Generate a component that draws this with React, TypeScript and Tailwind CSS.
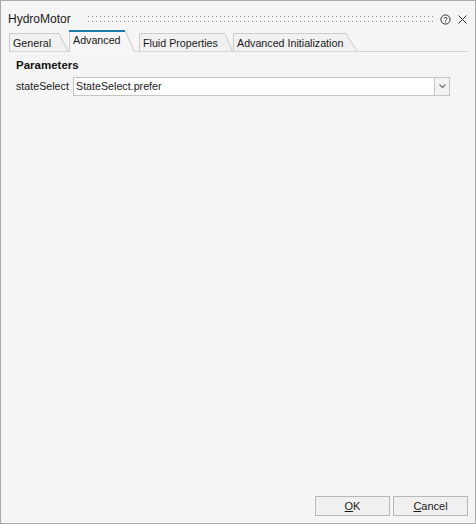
import type { ReactNode } from "react";

// Диалог параметров компонента HydroMotor

interface TabProps {
  readonly label: string;
  readonly width: number;
  readonly slant: number;
  readonly active?: boolean;
}

function Tab({ label, width, slant, active = false }: TabProps) {
  const h = active ? 22 : 19;
  const total = width + slant;
  const outline = `M0.5,${h} V0.5 H${width} L${total - 0.5},${h}`;
  return (
    <div className="relative flex shrink-0 items-start pl-[4px] pt-[3px]" style={{ width: total, height: h }}>
      <svg className="absolute left-0 top-0" width={total} height={h}>
        <path d={`${outline} Z`} fill={active ? "#f6f6f6" : "#f1f1f1"} stroke="none" />
        <path d={outline} fill="none" stroke="#cccccc" strokeWidth={1} />
        {active ? (
          <path d={`M0,1 H${width}`} stroke="#1b7ca5" strokeWidth={2} />
        ) : (
          <path d={`M0,${h - 0.5} H${total}`} stroke="#d6d6d6" strokeWidth={1} />
        )}
      </svg>
      <span className="relative text-[10.7px] leading-[14px] text-[#1a1a1a]">{label}</span>
    </div>
  );
}

function Gap({ w }: { readonly w?: number }) {
  return (
    <div
      className={`h-px self-end bg-[#d6d6d6] ${w ? "shrink-0" : "flex-1"}`}
      style={w ? { width: w } : undefined}
    />
  );
}

function DialogButton({ children }: { readonly children: ReactNode }) {
  return (
    <button
      type="button"
      className="flex h-[20px] w-[75px] items-center justify-center border border-[#b9b9b9] bg-[#f0f0f0] text-[11px] text-[#1a1a1a]"
    >
      {children}
    </button>
  );
}

export default function App() {
  return (
    <div
      className="flex h-[524px] w-[476px] flex-col border border-[#ababab] bg-[#f5f5f5]"
      style={{ fontFamily: '"Liberation Sans", Arial, sans-serif' }}
    >
      {/* Заголовок */}
      <div className="flex h-[29px] shrink-0 items-start pl-[7px] pr-[8px]">
        <span className="mt-[10px] text-[12px] leading-[16px] text-[#1a1a1a]">HydroMotor</span>
        <svg className="ml-[17px] mt-[14px]" width={346} height={8}>
          <defs>
            <pattern id="grip" width={4} height={5} patternUnits="userSpaceOnUse">
              <rect x={0} y={1} width={1} height={1} fill="#858585" />
            </pattern>
          </defs>
          <rect x={0} y={0} width={346} height={8} fill="url(#grip)" />
        </svg>
        <svg className="ml-[6px] mt-[13px]" width={11} height={11} viewBox="0 0 11 11">
          <circle cx={5.5} cy={5.5} r={4.6} fill="none" stroke="#333" strokeWidth={1} />
          <path d="M3.9,4.4 C3.9,3.2 7.1,3.1 7.1,4.5 C7.1,5.5 5.5,5.5 5.5,6.6" fill="none" stroke="#333" strokeWidth={1} />
          <rect x={5} y={7.4} width={1} height={1} fill="#333" />
        </svg>
        <svg className="ml-[7px] mt-[14px]" width={9} height={9} viewBox="0 0 9 9">
          <path d="M0.5,0.5 L8.5,8.5 M8.5,0.5 L0.5,8.5" stroke="#333" strokeWidth={1} />
        </svg>
      </div>

      {/* Вкладки */}
      <div className="flex h-[22px] shrink-0 items-end pl-[8px] pr-[7px]">
        <Tab label="General" width={50} slant={10} />
        <Tab label="Advanced" width={56} slant={10} active />
        <Gap w={4} />
        <Tab label="Fluid Properties" width={86} slant={8} />
        <Tab label="Advanced Initialization" width={113} slant={12} />
        <Gap />
      </div>

      {/* Параметры */}
      <div className="flex flex-1 flex-col pl-[15px] pr-[25px]">
        <div className="mt-[6px] text-[11.5px] font-bold leading-[14px] text-[#111]">Parameters</div>
        <div className="mt-[5px] flex h-[19px] items-center">
          <span className="w-[57px] text-[10.7px] text-[#1a1a1a]">stateSelect</span>
          <div className="flex h-[19px] flex-1 items-center border border-[#c4c4c4] bg-white pl-[2px] text-[10.7px] text-[#1a1a1a]">
            StateSelect.prefer
          </div>
          <div className="flex h-[19px] w-[15px] items-center justify-center border border-l-0 border-[#c4c4c4] bg-[#f3f3f3]">
            <svg width={7} height={5} viewBox="0 0 7 5">
              <path d="M0.5,0.5 L3.5,3.5 L6.5,0.5" fill="none" stroke="#7a7a7a" strokeWidth={1.3} />
            </svg>
          </div>
        </div>
      </div>

      {/* Кнопки */}
      <div className="flex shrink-0 justify-end gap-[3px] pb-[7px] pr-[7px]">
        <DialogButton>
          <span className="underline">O</span>K
        </DialogButton>
        <DialogButton>
          <span className="underline">C</span>ancel
        </DialogButton>
      </div>
    </div>
  );
}
